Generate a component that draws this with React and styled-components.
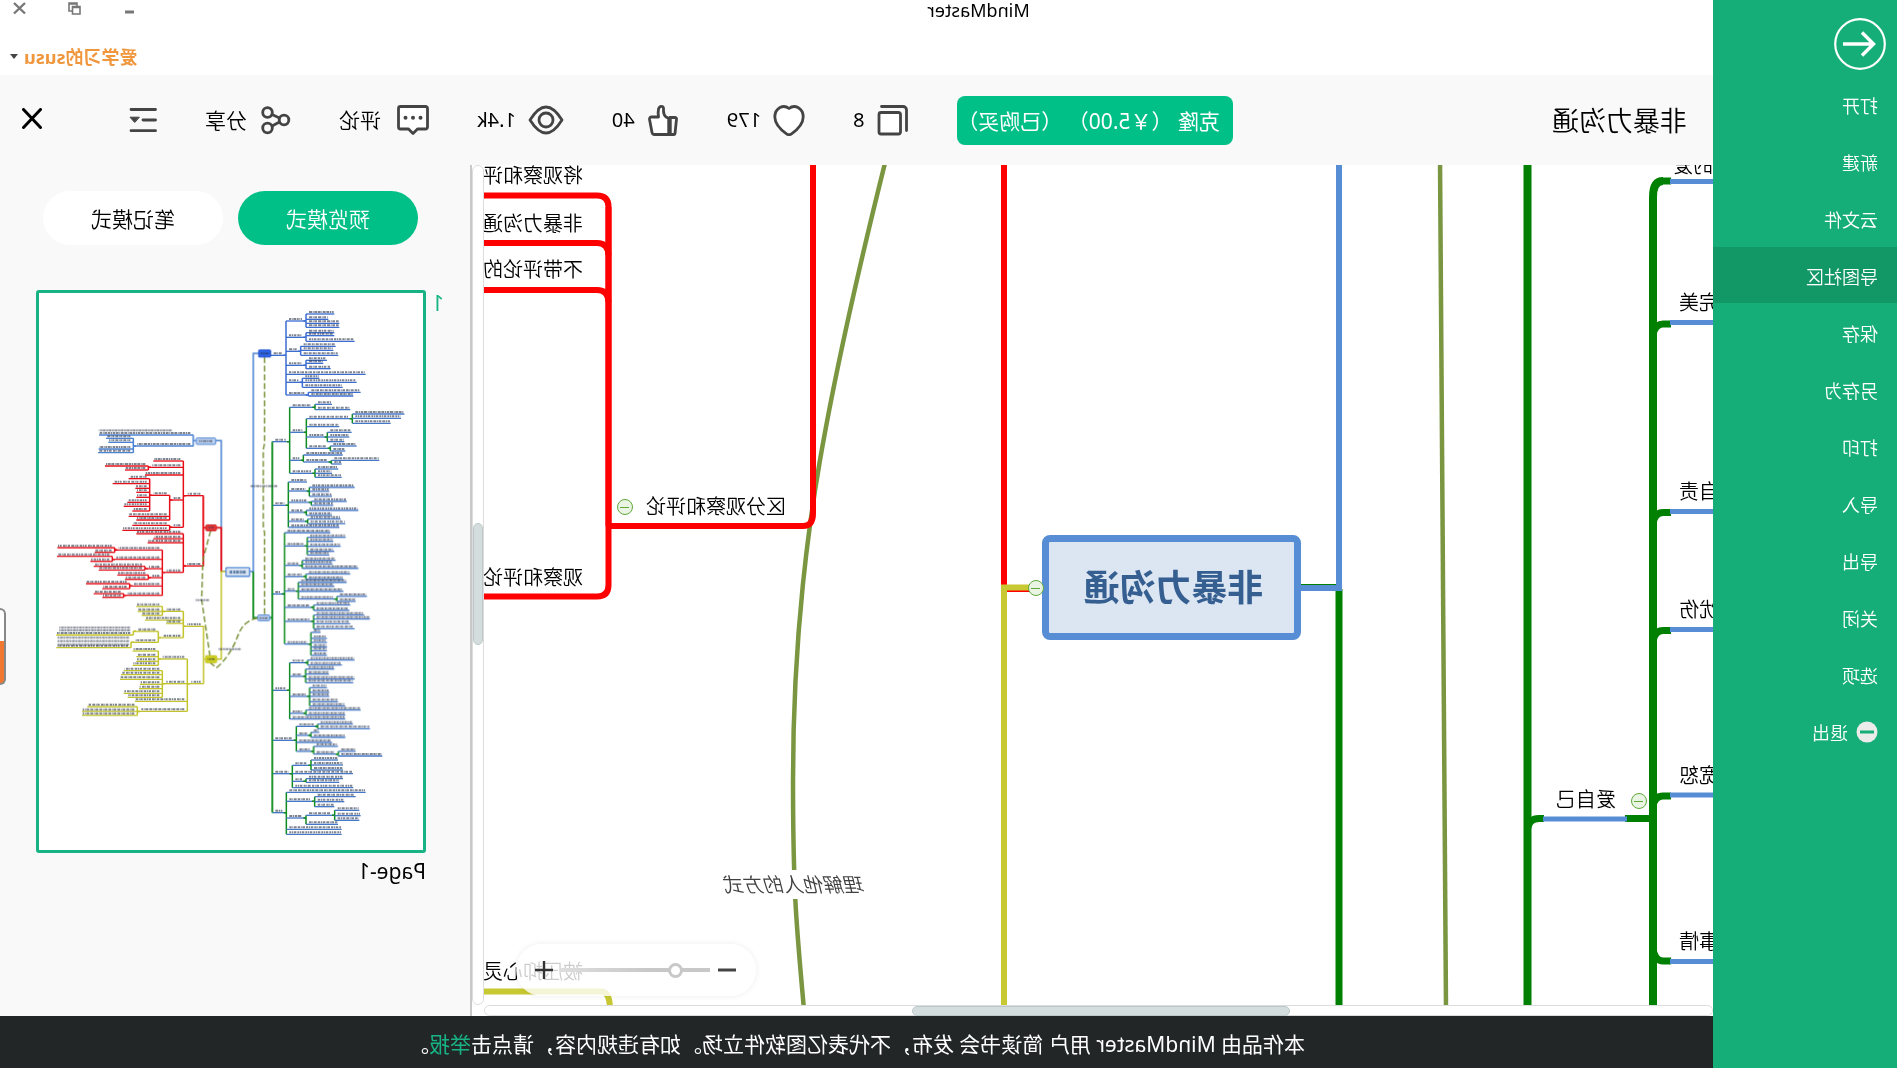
import { useState } from "react"
import styled, { createGlobalStyle } from "styled-components"

const GlobalStyle = createGlobalStyle`
  * {
    box-sizing: border-box;
  }
  body {
    margin: 0;
    background: #ffffff;
    overflow: hidden;
  }
  button, input {
    font-family: inherit;
  }
`

/* the whole window is flipped left to right */
const Window = styled.div`
  display: flex;
  min-height: 100vh;
  transform: scaleX(-1);
  font-family: "Noto Sans", "Noto Sans CJK SC", sans-serif;
  font-weight: 350;
  color: #000000;
  background: #ffffff;
`

const PlainButton = styled.button`
  display: flex;
  align-items: center;
  border: 0;
  padding: 0;
  background: none;
  color: inherit;
  font-weight: inherit;
  white-space: nowrap;
  cursor: pointer;
`

const SideMenu = styled.nav`
  width: 184px;
  flex: none;
  padding-top: 18px;
  background: #15ae79;
`

const BackButton = styled(PlainButton)`
  margin: 0 0 6px 11px;
`

const MenuList = styled.ul`
  display: flex;
  flex-direction: column;
  gap: 1px;
  margin: 0;
  padding: 0;
  list-style: none;
`

const MenuButton = styled(PlainButton)`
  width: 100%;
  height: 56px;
  padding: 2px 0 0 19px;
  gap: 8px;
  font-size: 18px;
  color: #ffffff;
  background: ${props => props.$active ? '#129767' : 'transparent'};
`

const Main = styled.div`
  flex: 1;
  min-width: 0;
  display: flex;
  flex-direction: column;
`

const TitleBar = styled.header`
  display: flex;
  height: 75px;
  flex: none;
`

const AppName = styled.div`
  flex: 1;
  text-align: center;
  font-size: 18px;
  line-height: 20px;
  font-weight: 400;
`

const TitleSide = styled.div`
  width: 244px;
  display: flex;
  flex-direction: column;
  align-items: flex-end;
  gap: 28px;
`

const WindowButtons = styled.div`
  display: flex;
  gap: 40px;
  padding: 2px 13px 0 0;
`

const UserButton = styled(PlainButton)`
  gap: 6px;
  padding-right: 10px;
  font-size: 18px;
  line-height: 26px;
  font-weight: 700;
  color: #f0963c;
`

const Toolbar = styled.div`
  display: flex;
  align-items: center;
  gap: 48px;
  height: 90px;
  flex: none;
  padding: 0 22px 0 26px;
  background: #f9f9f9;
`

const DocTitle = styled.h1`
  flex: 1;
  margin: 0;
  padding-top: 2px;
  font-size: 27px;
  line-height: 36px;
  font-weight: inherit;
  white-space: nowrap;
`

const CloneButton = styled(PlainButton)`
  justify-content: center;
  width: 276px;
  height: 49px;
  padding-left: 12px;
  border-radius: 8px;
  font-size: 21px;
  font-weight: 400;
  color: #ffffff;
  background: #00bf87;
`

const ToolButton = styled(PlainButton)`
  gap: ${props => props.$gap || 12}px;
  font-size: 21px;
  line-height: 30px;
`

const StatButton = styled(ToolButton)`
  font-size: 20px;
  font-weight: 400;
`

const CloseDoc = styled(PlainButton)`
  margin: 0 0 2px 39px;
`

const Workspace = styled.div`
  flex: 1;
  min-height: 0;
  display: flex;
`

const CanvasColumn = styled.div`
  flex: 1;
  min-width: 0;
  display: flex;
  flex-direction: column;
`

const Canvas = styled.div`
  position: relative;
  flex: 1;
  overflow: hidden;
`

const Links = styled.svg`
  position: absolute;
  left: 0;
  top: 0;
`

const Label = styled.span`
  position: absolute;
  left: ${props => props.$x}px;
  top: ${props => props.$y}px;
  padding-top: 1px;
  font-size: 20px;
  line-height: 28px;
  white-space: nowrap;
`

const RelationLabel = styled(Label)`
  font-style: italic;
  color: #404040;
  background: #ffffff;
`

const Topic = styled.div`
  position: absolute;
  left: 412px;
  top: 370px;
  width: 259px;
  height: 105px;
  display: flex;
  align-items: center;
  justify-content: center;
  padding: 0 4px 4px 0;
  border: 7px solid #578dd5;
  border-radius: 8px;
  background: #dce5f2;
  color: #365f91;
  font-size: 36px;
  font-weight: 700;
`

const Fold = styled.button`
  position: absolute;
  left: ${props => props.$x}px;
  top: ${props => props.$y}px;
  width: 16px;
  height: 16px;
  padding: 0;
  border: 1px solid #5fa83c;
  border-radius: 50%;
  background: linear-gradient(#5fa83c, #5fa83c) center / 9px 1px no-repeat, #e9f5e2;
`

const ZoomBar = styled.div`
  position: absolute;
  right: 32px;
  bottom: 9px;
  display: flex;
  align-items: center;
  gap: 8px;
  width: 240px;
  height: 52px;
  padding: 0 19px 0 20px;
  border-radius: 26px;
  background: rgba(255, 255, 255, 0.8);
  box-shadow: 0 0 6px rgba(0, 0, 0, 0.08);
`

const ZoomRange = styled.input`
  flex: 1;
  min-width: 0;
  height: 16px;
  margin: 0;
  appearance: none;
  background: linear-gradient(90deg, #c8c8c8 40%, #dddddd) center / 100% 4px no-repeat;
  &::-webkit-slider-thumb {
    appearance: none;
    width: 15px;
    height: 15px;
    border: 3px solid #c8c8c8;
    border-radius: 50%;
    background: #ffffff;
  }
`

const BottomScroll = styled.div`
  height: 11px;
  flex: none;
  border: 1px solid #dcdcdc;
  border-radius: 6px;
`

const BottomThumb = styled.div`
  width: 378px;
  height: 10px;
  margin-left: 422px;
  border: 1px solid #bcc8c8;
  border-radius: 5px;
  background: #d3dddd;
`

const SideScroll = styled.div`
  width: 12px;
  margin-bottom: 11px;
  padding-top: 357px;
  border: 1px solid #dcdcdc;
  border-radius: 6px;
`

const SideThumb = styled.div`
  height: 122px;
  border: 1px solid #bcc8c8;
  border-radius: 6px;
  background: #d3dddd;
`

const Panel = styled.aside`
  position: relative;
  width: 472px;
  flex: none;
  padding: 26px 36px 0 26px;
  border-left: 2px solid #c8c8c8;
  background: #f9f9f9;
`

const ModeTabs = styled.div`
  display: flex;
  gap: 15px;
  padding: 0 7px 0 26px;
`

const ModeTab = styled(PlainButton)`
  flex: 1;
  justify-content: center;
  height: 54px;
  border-radius: 27px;
  font-size: 21px;
  color: ${props => props.$active ? '#ffffff' : '#000000'};
  background: ${props => props.$active ? '#00bf87' : '#ffffff'};
`

const PageRow = styled.div`
  display: flex;
  align-items: flex-start;
  gap: 8px;
  margin-top: 45px;
`

const PageNumber = styled.div`
  width: 10px;
  font-size: 21px;
  line-height: 26px;
  font-weight: 400;
  color: #17b384;
`

const PageFigure = styled.figure`
  flex: 1;
  margin: 0;
`

const PageFrame = styled.div`
  border: 3px solid #17b384;
  border-radius: 3px;
  background: #ffffff;
  svg {
    display: block;
    width: 100%;
  }
`

const PageName = styled.figcaption`
  padding-top: 3px;
  font-size: 21px;
  line-height: 30px;
  font-weight: 400;
`

const EdgeTab = styled.div`
  position: absolute;
  right: 0;
  top: 443px;
  width: 6px;
  height: 77px;
  border: 2px solid #888888;
  border-right: 0;
  border-radius: 6px 0 0 6px;
  background: linear-gradient(#ffffff 43%, #f07830 43%);
`

const Footer = styled.footer`
  height: 52px;
  flex: none;
  display: flex;
  align-items: center;
  justify-content: center;
  padding-top: 2px;
  font-size: 21px;
  font-weight: 400;
  white-space: pre;
  color: #ffffff;
  background: #222627;
  a {
    color: #17b384;
    text-decoration: none;
  }
`

const menu = ['打开', '新建', '云文件', '导图社区', '保存', '另存为', '打印', '导入', '导出', '关闭', '选项', '退出']

function Icon({ width = 32, height = 32, children }) {
  return (
    <svg width={width} height={height} viewBox={`0 0 ${width} ${height}`} fill="none"
      stroke="#444444" strokeWidth="2.8" strokeLinejoin="round" strokeLinecap="round" aria-hidden="true">
      {children}
    </svg>
  )
}

const CopyIcon = () => (
  <Icon>
    <path d="M27.5 2.5H6a3.5 3.5 0 0 0-3.5 3.5v20.500" />
    <rect x="8.500" y="8.500" width="21.500" height="21.500" rx="2" fill="#ffffff" />
  </Icon>
)

const HeartIcon = () => (
  <Icon>
    <path fill="#ffffff" d="M16 4.500C13.500 2.500 10 2 7 3.500C3.500 5.500 1.800 9 1.800 13C2 20 8 26 13.500 29.800Q16 31.500 18.500 29.800C24 26 30 20 30.200 13C30.200 9 28.500 5.500 25 3.500C22 2 18.500 2.500 16 4.500Z" />
  </Icon>
)

const ThumbIcon = () => (
  <Icon>
    <path d="M9 13.500H4a1.500 1.500 0 0 0-1.500 1.700L4 29.500a1 1 0 0 0 1 1h4z" />
    <path fill="#ffffff" d="M10 14.500L13 13Q15.500 11 15.500 7V4.500C15.500 1.500 19.500 1.500 20.500 5Q21.200 8.500 20.500 13H27.500a2 2 0 0 1 2 2.300L27 28.500a2.500 2.500 0 0 1-2.500 2H10z" />
    <path strokeWidth="4" d="M9.500 15V29.500" />
  </Icon>
)

const EyeIcon = () => (
  <Icon width={36}>
    <path d="M2 16C7 8 12 3 18 3S29 8 34 16C29 24 24 29 18 29S7 24 2 16Z" />
    <circle cx="18" cy="16" r="7" />
  </Icon>
)

const CommentIcon = () => (
  <Icon>
    <path fill="#ffffff" d="M3.500 2.500H28.500a2 2 0 0 1 2 2V23a2 2 0 0 1-2 2H20.500L16 29.500L11.500 25H3.500a2 2 0 0 1-2-2V4.500a2 2 0 0 1 2-2Z" />
    <path strokeWidth="4" d="M8.500 13.800h0M16 13.800h0M23.500 13.800h0" />
  </Icon>
)

const ShareIcon = () => (
  <Icon>
    <circle cx="7" cy="16" r="4.800" />
    <circle cx="23.500" cy="8.500" r="4.800" />
    <circle cx="23.500" cy="24" r="4.800" />
    <path d="M11.500 14L19 10.500M11.500 18L19 22" />
  </Icon>
)

const OutlineIcon = () => (
  <Icon width={28}>
    <path d="M1.500 5.500H26M1.500 16H14M1.500 26.700H26" />
    <path d="M18 13.200h9l-4.500 5z" fill="#444444" strokeWidth="1" />
  </Icon>
)

const stats = [
  ['克隆数', CopyIcon, '8'],
  ['收藏', HeartIcon, '179'],
  ['点赞', ThumbIcon, '40'],
  ['浏览', EyeIcon, '1.4k'],
]

/* x, y, text */
const labels = [
  [0, -14, '的爱'],
  [-6, 123, '完美'],
  [-6, 312, '自责'],
  [-6, 430, '忧伤'],
  [-6, 596, '宽恕'],
  [-6, 762, '事情'],
  [97, 620, '爱自己'],
  [927, 327, '区分观察和评论'],
  [1130, -4, '将观察和评论'],
  [1130, 44, '非暴力沟通'],
  [1130, 90, '不带评论的'],
  [1130, 398, '观察和评论'],
  [1130, 792, '被压抑心灵'],
]

function CanvasLinks() {
  return (
    <Links width="1229" height="840" fill="none">
      <g stroke="#7a9640" strokeWidth="4.500">
        <path d="M273 -5Q272 380 267 845" />
        <path d="M828 -2C853 98 876 197 893 295S920 495 920 615S916 765 909 845" />
      </g>
      <g stroke="#008000">
        <path strokeWidth="8" d="M185.500 0V840" />
        <path strokeWidth="8" d="M60 840V32Q60 16 50 16" />
        <g strokeWidth="7">
          <path d="M42 16H50M42 159H50Q58 159 60 170M42 347.500H50Q58 347.500 60 358M42 465.500H50Q58 465.500 60 476M42 631H50Q58 631 60 641M42 796H50Q58 796 60 784" />
          <path d="M60 653.500H88M169 653.500H174Q184 653.500 185.500 664" />
          <path d="M374 424V840" />
        </g>
        <path strokeWidth="2" d="M374 420H413" />
      </g>
      <g stroke="#578dd5" strokeWidth="5">
        <path d="M0 16.500H43M0 157.500H43M0 346.500H43M0 464.500H43M0 630H43M0 796.500H43M86 654H170" />
        <path strokeWidth="6" d="M374 0V423H413" />
      </g>
      <g stroke="#ff0000" strokeWidth="6">
        <path d="M709 0V421" />
        <path strokeWidth="2" d="M680 426H706" />
        <path d="M900 0V348Q900 361 910 361H1104M1104.500 361V42" />
        <path d="M1240 30.500H1116Q1104.500 30.500 1104.500 42V420Q1104.500 431.500 1116 431.500H1240" />
        <path d="M1104.500 90Q1105 78 1116 78H1240M1104.500 137Q1105 125 1116 125H1240" />
      </g>
      <g stroke="#c8c832" strokeWidth="6">
        <path d="M684 422.500H709V840" />
        <path d="M1240 826.500H1112Q1103 826.500 1103 845" />
      </g>
    </Links>
  )
}

/*
  Page preview. A branch is [y, spineX, children], a leaf is [y, endX].
*/
const preview = [
  {
    color: '#3c6ed2', from: 457, leaf: '#3c6ed2',
    items: [[187, 411, [
      [84, 351, [[63, 266], [79, 284], [91, 251], [103, 251]]],
      [133, 351, [[119, 266], [128, 266], [145, 205]]],
      [175, 367, [[160, 262], [172, 269], [187, 254]]],
      [217, 351, [[202, 288], [211, 299], [227, 277]]],
      [244, 172],
      [268, 362, [[256, 311], [268, 199], [283, 241]]],
      [306, 344, [[298, 187], [309, 209]]],
    ]]],
  },
  {
    color: '#0f8c1e', from: 452, leaf: '#4678c8',
    items: [
      [446, 400, [
        [343, 324, [[334, 273], [350, 218]]],
        [418, 350, [
          [377, 212, [[363, 56], [376, 66], [391, 97]]],
          [401, 251],
          [432, 287, [[418, 214], [432, 221], [446, 236]]],
          [466, 278, [[459, 199], [474, 233]]],
        ]],
        [502, 359, [[486, 241], [507, 275, [[502, 131], [513, 244]]]]],
        [541, 324, [[528, 254], [541, 273], [553, 244]]],
      ]],
      [637, 404, [
        [567, 348],
        [594, 341, [[583, 205], [595, 281], [610, 273]]],
        [628, 335, [[625, 229], [637, 269]]],
        [658, 350, [[652, 194], [667, 273]]],
        [685, 346, [[678, 247], [692, 233]]],
        [703, 251],
      ]],
      [903, 415, [
        [719, 278],
        [759, 347, [[733, 232], [745, 269], [760, 247], [775, 266], [786, 281]]],
        [817, 362, [[802, 262], [813, 271], [826, 194]]],
        [851, 351, [[843, 218], [859, 239]]],
        [894, 374, [[868, 229], [880, 266], [895, 239], [918, 258, [[910, 168], [925, 202]]]]],
        [943, 328, [[936, 218], [952, 221]]],
        [985, 328, [[966, 176], [978, 159], [992, 218], [1007, 205]]],
        [1053, 336, [[1018, 307], [1036, 288], [1048, 288], [1062, 288], [1073, 288], [1087, 288]]],
      ]],
      [1192, 400, [
        [1109, 346, [[1101, 205], [1116, 243]]],
        [1150, 352, [[1128, 266], [1143, 282], [1158, 205], [1169, 209]]],
        [1210, 340, [[1184, 288], [1198, 281], [1210, 281], [1226, 255], [1239, 233]]],
        [1261, 351, [[1251, 187], [1266, 233]]],
        [1278, 233],
      ]],
      [1342, 380, [
        [1300, 316, [[1293, 210], [1307, 159]]],
        [1327, 336, [[1318, 311], [1333, 233]]],
        [1348, 273],
        [1375, 328, [[1360, 255], [1383, 254, [[1375, 202], [1389, 122]]]]],
      ]],
      [1442, 392, [
        [1417, 336, [[1401, 255], [1416, 240], [1431, 240]]],
        [1442, 210],
        [1465, 351, [[1457, 240], [1468, 251]]],
        [1484, 209],
      ]],
      [1559, 410, [
        [1498, 172],
        [1525, 325, [[1511, 202], [1526, 236], [1541, 266]]],
        [1575, 351, [[1567, 265, [[1552, 191], [1568, 187], [1582, 191]]], [1594, 255]]],
        [1609, 244],
        [1624, 244],
      ]],
    ],
  },
  {
    color: '#4b82d2', from: 689, leaf: '#4b82d2',
    items: [
      [426, 972],
      [459, 869, [[436, 951], [448, 944], [468, 973], [479, 975]]],
    ],
  },
  {
    color: '#e60f19', from: 659, leaf: '#e60f19',
    items: [
      [608, 719, [
        [504, 809],
        [523, 824, [[519, 954], [531, 894]]],
        [546, 834],
        [621, 760, [
          [607, 820, [[557, 883], [572, 931], [586, 863], [598, 860], [613, 860], [628, 887], [640, 898], [654, 872]]],
          [670, 883],
          [681, 860],
        ]],
        [703, 760, [[697, 872], [712, 902]]],
      ]],
      [819, 719, [
        [722, 860], [737, 809], [749, 826],
        [838, 782, [
          [771, 925, [[764, 1097], [778, 985]]],
          [799, 932, [[790, 1098], [805, 998]]],
          [827, 834, [[820, 988], [831, 973]]],
          [854, 824, [[846, 917], [859, 894]]],
          [879, 880, [[872, 1011], [887, 962]]],
          [907, 898, [[902, 988], [913, 962]]],
        ]],
      ]],
    ],
  },
  {
    color: '#c3c32d', from: 658, leaf: '#c3c32d',
    items: [
      [1000, 719, [
        [955, 782, [[940, 860], [955, 856], [967, 844]]],
        [981, 834], [991, 771],
        [1034, 794, [[1015, 869, [[1026, 1100]]], [1048, 876, [[1064, 1100]]]]],
      ]],
      [1172, 707, [
        [1098, 794, [[1074, 871], [1091, 860], [1105, 860], [1117, 871]]],
        [1172, 782, [[1133, 898], [1145, 906], [1159, 909], [1174, 849], [1187, 852], [1201, 898], [1213, 886]]],
        [1225, 864],
        [1255, 857, [[1241, 1007], [1255, 1023], [1267, 1023]]],
      ]],
    ],
  },
]

function Branch({ x, item, color, leaf }) {
  const [y, x2, children] = item
  const dir = x2 > x ? 1 : -1
  const ys = children ? [y, ...children.map(child => child[0])] : []
  return (
    <>
      <path d={`M${x} ${y}H${x2}`} stroke={leaf} strokeWidth="4" />
      <path d={`M${x + dir * 9} ${y - 6}H${x2 - dir * (children ? 12 : 2)}`}
        stroke="#283246" strokeWidth="6" strokeDasharray={`${6 + y % 4} 2 3 2 8 ${2 + y % 3}`} opacity="0.6" />
      {children && (
        <>
          <path d={`M${x2} ${Math.min(...ys)}V${Math.max(...ys)}M${x2 - dir * 8} ${y}H${x2}`} stroke={color} strokeWidth="4.500" />
          {children.map((child, i) => <Branch key={i} x={x2} item={child} color={color} leaf={leaf} />)}
        </>
      )}
    </>
  )
}

function PagePreview() {
  return (
    <svg viewBox="0 0 1152 1671" fill="none" role="img" aria-label="Page-1">
      {preview.map((group, i) => (
        <g key={i}>
          {group.items.map((item, j) => (
            <Branch key={j} x={group.from} item={item} color={group.color} leaf={group.leaf} />
          ))}
        </g>
      ))}
      <g strokeWidth="4.500">
        <path stroke="#4b82d2" d="M493 181H509V836H520M592 836H605V443H621M681 443H689M689 426V459" />
        <path stroke="#0f8c1e" strokeWidth="5.500" d="M509 836V974H496M459 974H452M452 446V1559" />
        <path stroke="#e60f19" strokeWidth="5.500" d="M605 836V704H620M651 704H659M659 608V819" />
        <path stroke="#c3c32d" d="M592 836H605V1098H619M652 1098H658M658 1000V1172" />
      </g>
      <g stroke="#6e8728" strokeWidth="4" strokeDasharray="18 8">
        <path d="M475 192V450L479 470V700L475 720V965" />
        <path d="M496 975C540 985 548 1010 560 1040S595 1105 619 1124L640 1108" />
        <path d="M637 713L660 800L664 920L639 1088" />
      </g>
      <g strokeWidth="3">
        <rect x="457" y="171" width="36" height="21" rx="2" fill="#2d64eb" stroke="#2350c8" />
        <rect x="520" y="824" width="71" height="26" rx="2" fill="#dce5f2" stroke="#578dd5" strokeWidth="4" />
        <rect x="460" y="966" width="35" height="17" rx="2" fill="#bed2f0" stroke="#4b82d2" />
        <rect x="622" y="435" width="58" height="19" rx="2" fill="#bed2f0" stroke="#4b82d2" />
        <rect x="620" y="696" width="31" height="17" rx="2" fill="#f03c3c" stroke="#c81414" />
        <rect x="619" y="1088" width="33" height="21" rx="2" fill="#d2d21e" stroke="#c3c32d" />
      </g>
      <g stroke="#283246" strokeWidth="6" strokeDasharray="9 2 5 2" opacity="0.55">
        <path d="M437 579H517M642 921H682M547 1068H614M632 444H672M466 975H490M627 704H646M625 1098H646M463 181H487" />
        <path d="M754 412H972M879 1004H1091M879 1012H1091M882 1034H1096M882 1044H1096M882 1055H1096" />
      </g>
      <path d="M532 837H580" stroke="#365f91" strokeWidth="9" strokeDasharray="9 2 6 3" opacity="0.8" />
    </svg>
  )
}

export default function App() {
  const [mode, setMode] = useState('预览模式')
  const [zoom, setZoom] = useState(20)

  return (
    <Window>
      <GlobalStyle />
      <SideMenu>
        <BackButton aria-label="返回">
          <svg width="52" height="52" fill="none" stroke="#ffffff">
            <circle cx="26" cy="26" r="24.800" strokeWidth="2.200" />
            <path d="M43 26H13M24 14.500L12.500 26L24 37.500" strokeWidth="3.400" />
          </svg>
        </BackButton>
        <MenuList>
          {menu.map(name => (
            <li key={name}>
              <MenuButton $active={name === '导图社区'}>
                {name === '退出' && (
                  <svg width="22" height="22" aria-hidden="true">
                    <circle cx="11" cy="11" r="10.500" fill="#ebebeb" />
                    <path d="M4 11H18" stroke="#15ae79" strokeWidth="3" />
                  </svg>
                )}
                {name}
              </MenuButton>
            </li>
          ))}
        </MenuList>
      </SideMenu>

      <Main>
        <TitleBar>
          <AppName>MindMaster</AppName>
          <TitleSide>
            <WindowButtons>
              <PlainButton aria-label="最小化">
                <svg width="13" height="14"><path d="M0 10H9" stroke="#777777" strokeWidth="3" /></svg>
              </PlainButton>
              <PlainButton aria-label="还原">
                <svg width="14" height="14" fill="none" stroke="#777777" strokeWidth="1.600">
                  <path d="M1 4.500H8.500V12H1zM1 5.500H8.500M4 4V1H12V9H9M4 2H12" />
                </svg>
              </PlainButton>
              <PlainButton aria-label="关闭窗口">
                <svg width="14" height="14"><path d="M2 1L13 11.500M13 1L2 11.500" stroke="#777777" strokeWidth="2.400" /></svg>
              </PlainButton>
            </WindowButtons>
            <UserButton>
              爱学习的susu
              <svg width="8" height="6" aria-hidden="true"><path d="M0 0H8L4 5z" fill="#444444" /></svg>
            </UserButton>
          </TitleSide>
        </TitleBar>

        <Toolbar>
          <DocTitle>非暴力沟通</DocTitle>
          <CloneButton>克隆 （￥5.00） （已购买）</CloneButton>
          {stats.map(([name, StatIcon, count]) => (
            <StatButton key={name} title={name}><StatIcon />{count}</StatButton>
          ))}
          <ToolButton $gap={16}><CommentIcon />评论</ToolButton>
          <ToolButton><ShareIcon />分享</ToolButton>
          <ToolButton aria-label="大纲"><OutlineIcon /></ToolButton>
          <CloseDoc aria-label="关闭">
            <svg width="20" height="22" stroke="#000000" strokeWidth="3" strokeLinecap="round">
              <path d="M1.500 1.500L18.500 19.500M18.500 1.500L1.500 19.500" />
            </svg>
          </CloseDoc>
        </Toolbar>

        <Workspace>
          <CanvasColumn>
            <Canvas>
              <CanvasLinks />
              {labels.map(([x, y, text]) => <Label key={text} $x={x} $y={y}>{text}</Label>)}
              <RelationLabel $x={848} $y={705}>理解他人的方式</RelationLabel>
              <Topic>非暴力沟通</Topic>
              <Fold $x={66} $y={628} aria-label="收起" />
              <Fold $x={669} $y={415} aria-label="收起" />
              <Fold $x={1080} $y={334} aria-label="收起" />
              <ZoomBar>
                <PlainButton aria-label="缩小">
                  <svg width="18" height="18"><path d="M0 9H18" stroke="#444444" strokeWidth="3" /></svg>
                </PlainButton>
                <ZoomRange type="range" aria-label="缩放" value={zoom} onChange={e => setZoom(e.target.value)} />
                <PlainButton aria-label="放大">
                  <svg width="18" height="18"><path d="M0 9H18M9 0V18" stroke="#333333" strokeWidth="2.400" /></svg>
                </PlainButton>
              </ZoomBar>
            </Canvas>
            <BottomScroll><BottomThumb /></BottomScroll>
          </CanvasColumn>
          <SideScroll><SideThumb /></SideScroll>

          <Panel>
            <ModeTabs>
              {['预览模式', '笔记模式'].map(name => (
                <ModeTab key={name} $active={mode === name} onClick={() => setMode(name)}>{name}</ModeTab>
              ))}
            </ModeTabs>
            <PageRow>
              <PageNumber>1</PageNumber>
              <PageFigure>
                <PageFrame><PagePreview /></PageFrame>
                <PageName>Page-1</PageName>
              </PageFigure>
            </PageRow>
            <EdgeTab />
          </Panel>
        </Workspace>

        <Footer>
          本作品由 MindMaster 用户 简读书会 发布，不代表亿图软件立场。如有违规内容，请点击<a href="#report">举报</a>。
        </Footer>
      </Main>
    </Window>
  )
}
